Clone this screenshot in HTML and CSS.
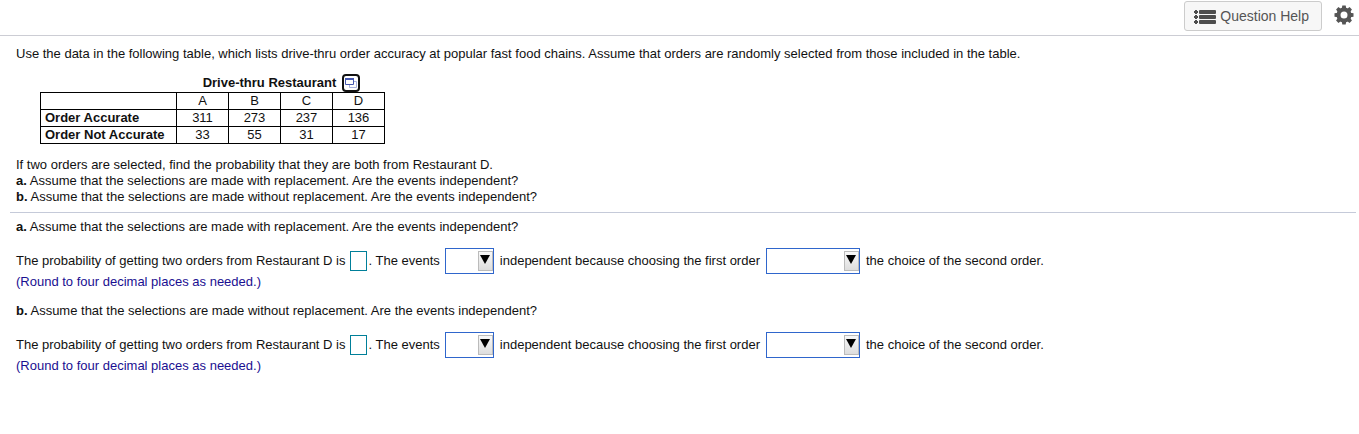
FILE: index.html
```html
<!DOCTYPE html>
<html lang="en">
<head>
    <meta charset="utf-8">
    <title>Question</title>
    <link rel="stylesheet" href="styles.css">
</head>
<body>
    <header class="toolbar">
        <button type="button" class="help">
            <svg width="22" height="16" viewBox="0 0 22 16" fill="#4d4d4d">
                <path d="M1 2h2v1h1v2H3v1H1V5H0V3h1zM1 7h2v1h1v2H3v1H1v-1H0V8h1zM1 12h2v1h1v2H3v1H1v-1H0v-2h1z"/>
                <rect x="5" y="2" width="17" height="4" rx="1"/>
                <rect x="5" y="7" width="17" height="4" rx="1"/>
                <rect x="5" y="12" width="17" height="4" rx="1"/>
            </svg>
            Question Help
        </button>
        <button type="button" class="settings" aria-label="Settings">
            <svg width="20" height="20" viewBox="0 0 20 20">
                <g fill="#555">
                    <path id="tooth" d="M7.700 4L8.300 .5h3.400l.6 3.500z"/>
                    <use href="#tooth" transform="rotate(45 10 10)"/>
                    <use href="#tooth" transform="rotate(90 10 10)"/>
                    <use href="#tooth" transform="rotate(135 10 10)"/>
                    <use href="#tooth" transform="rotate(180 10 10)"/>
                    <use href="#tooth" transform="rotate(225 10 10)"/>
                    <use href="#tooth" transform="rotate(270 10 10)"/>
                    <use href="#tooth" transform="rotate(315 10 10)"/>
                </g>
                <circle cx="10" cy="10" r="5.500" fill="none" stroke="#555" stroke-width="4"/>
            </svg>
        </button>
    </header>

    <main>
        <section class="question">
            <p>Use the data in the following table, which lists drive-thru order accuracy at popular fast food chains. Assume that orders are randomly selected from those included in the table.</p>
            <table class="data">
                <thead>
                    <tr class="title">
                        <td></td>
                        <th colspan="4">
                            <div class="title-row">
                                Drive-thru Restaurant
                                <button type="button" class="popout" aria-label="Open table in a window">
                                    <svg width="18" height="18" viewBox="0 0 18 18">
                                        <rect x="1" y="1" width="16" height="16" rx="3" fill="#fff" stroke="#111" stroke-width="2"/>
                                        <path d="M7.500 7.500h7v6h-7z" fill="#fff" stroke="#a9b2df"/>
                                        <path d="M3.500 4.500h8v6h-8z" fill="#fff" stroke="#4658b0"/>
                                        <path d="M3 5h9" stroke="#4658b0" stroke-width="2"/>
                                    </svg>
                                </button>
                            </div>
                        </th>
                    </tr>
                    <tr><td></td><td>A</td><td>B</td><td>C</td><td>D</td></tr>
                </thead>
                <tbody>
                    <tr><th>Order Accurate</th><td>311</td><td>273</td><td>237</td><td>136</td></tr>
                    <tr><th>Order Not Accurate</th><td>33</td><td>55</td><td>31</td><td>17</td></tr>
                </tbody>
            </table>
            <p>If two orders are selected, find the probability that they are both from Restaurant D.<br>
            <b>a.</b> Assume that the selections are made with replacement. Are the events independent?<br>
            <b>b.</b> Assume that the selections are made without replacement. Are the events independent?</p>
        </section>

        <form class="answers">
            <p><b>a.</b> Assume that the selections are made with replacement. Are the events independent?</p>
            <div class="line">
                <label for="prob-a">The probability of getting two orders from Restaurant D is</label>
                <input type="text" id="prob-a" class="blank"><label for="are-a" class="after">. The events</label>
                <span class="drop">
                    <select id="are-a"><option></option><option>are</option><option>are not</option></select>
                </span>
                <label for="affect-a">independent because choosing the first order</label>
                <span class="drop wide">
                    <select id="affect-a"><option></option><option>affects</option><option>does not affect</option></select>
                </span>
                <span>the choice of the second order.</span>
            </div>
            <p class="hint">(Round to four decimal places as needed.)</p>

            <p><b>b.</b> Assume that the selections are made without replacement. Are the events independent?</p>
            <div class="line">
                <label for="prob-b">The probability of getting two orders from Restaurant D is</label>
                <input type="text" id="prob-b" class="blank"><label for="are-b" class="after">. The events</label>
                <span class="drop">
                    <select id="are-b"><option></option><option>are</option><option>are not</option></select>
                </span>
                <label for="affect-b">independent because choosing the first order</label>
                <span class="drop wide">
                    <select id="affect-b"><option></option><option>affects</option><option>does not affect</option></select>
                </span>
                <span>the choice of the second order.</span>
            </div>
            <p class="hint">(Round to four decimal places as needed.)</p>
        </form>
    </main>
</body>
</html>
```

FILE: styles.css
```css
*, *::before {
    box-sizing: border-box;
}
body {
    margin: 0;
    background: #fff;
    color: #111;
    font: 13px/16px "Liberation Sans", Arial, sans-serif;
}
p {
    margin: 0;
}
button {
    font-family: inherit;
    cursor: pointer;
}

/* top bar */
.toolbar {
    display: flex;
    justify-content: flex-end;
    align-items: flex-start;
    gap: 12px;
    height: 36px;
    padding-right: 5px;
    border-bottom: 1px solid #cccdd4;
}
.help {
    display: flex;
    align-items: center;
    gap: 4px;
    height: 30px;
    margin-top: 1px;
    padding: 0 12px 0 9px;
    border: 1px solid #ccc;
    border-radius: 3px;
    background: #f7f7f7;
    color: #555;
    font-size: 14px;
}
.settings {
    margin-top: 5px;
    padding: 0;
    border: 0;
    background: none;
}
.settings svg, .popout svg {
    display: block;
}

/* question text and table */
.question {
    margin: 0 3px 0 10px;
    padding: 10px 6px 7px;
    border-bottom: 1px solid #c5cad9;
}
.data {
    margin: 12px 0 13px 24px;
    border-collapse: collapse;
}
.data th, .data td {
    width: 52px;
    height: 17px;
    padding: 0;
    border: 1px solid #000;
    line-height: 16px;
    text-align: center;
}
.data th:first-child, .data td:first-child {
    width: 136px;
    padding-left: 4px;
    text-align: left;
}
.data .title th, .data .title td {
    border-width: 0 0 1px;
}
.title-row {
    display: flex;
    justify-content: center;
    align-items: center;
    gap: 6px;
    height: 18px;
    padding-left: 2px;
}
.popout {
    padding: 0;
    border: 0;
    background: none;
}

/* answers */
.answers {
    padding: 6px 16px;
}
.line {
    display: flex;
    align-items: center;
    gap: 6px;
    margin-top: 13px;
}
.blank {
    width: 17px;
    height: 20px;
    margin-left: -1px;
    padding: 0;
    border: 1px solid #007f99;
    background: #fff;
}
.after {
    margin-left: -5px;
}
.drop {
    position: relative;
    width: 49px;
    height: 26px;
}
.after + .drop {
    margin-left: -1px;
}
.drop.wide {
    width: 94px;
}
.drop select {
    width: 100%;
    height: 100%;
    padding: 0 18px 0 3px;
    appearance: none;
    border: 1px solid #2f66cc;
    border-radius: 0;
    background: #fff;
    font: inherit;
}
.drop::before {
    content: "";
    position: absolute;
    top: 3px;
    right: 1px;
    width: 15px;
    height: 20px;
    border: 1px solid #bbb;
    background: linear-gradient(#f8f8f8, #ddd);
    pointer-events: none;
}
.drop::after {
    content: "";
    position: absolute;
    top: 7px;
    right: 4px;
    border: solid transparent;
    border-width: 9px 5px 0;
    border-top-color: #000;
    pointer-events: none;
}
.hint {
    margin-bottom: 13px;
    color: #1a0f91;
}
```
